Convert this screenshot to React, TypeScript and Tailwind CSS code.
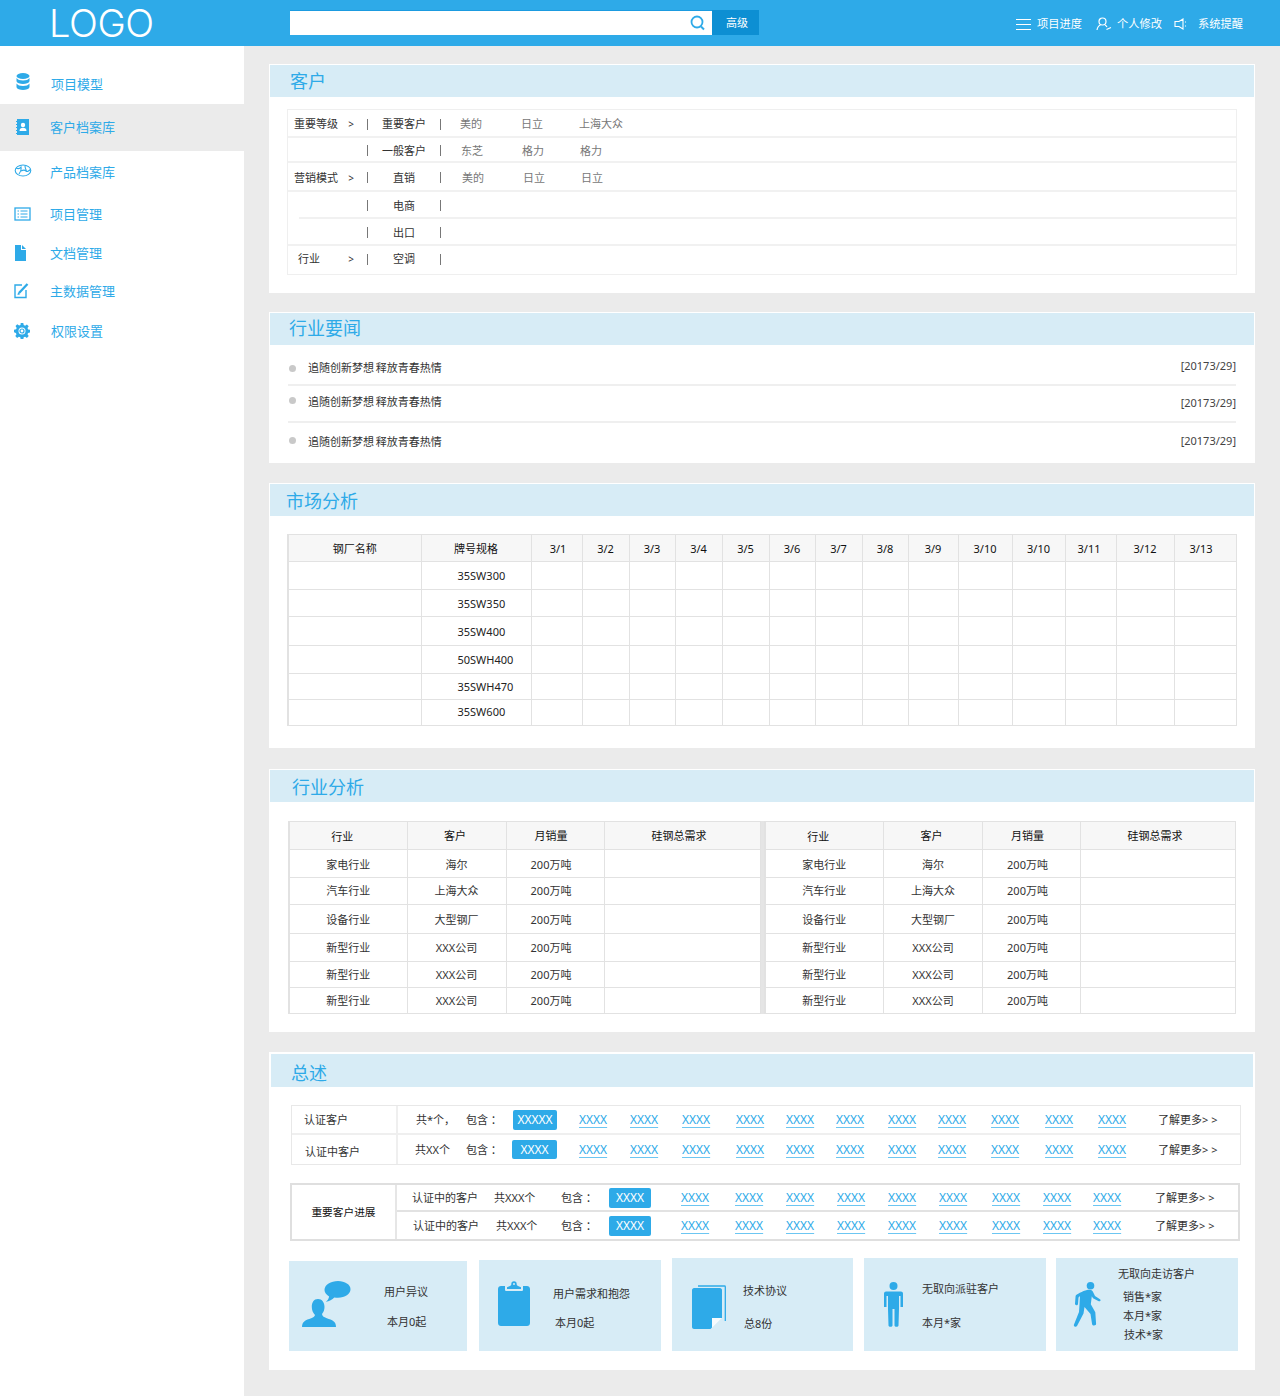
import React from 'react';

function Card({ title, className, band, pad, children }: { title: string; className: string; band: string; pad: string; children: React.ReactNode }) {
  return (
    <section className={`bg-white ${className}`}>
      <div className={`flex h-[32px] items-center bg-[#d7ecf6] text-[18px] leading-[24px] text-[#2eaae8] ${band} ${pad}`}>{title}</div>
      {children}
    </section>
  );
}

function Sep() {
  return <span className="h-[11px] w-px shrink-0 bg-[#777]" />;
}

function CustRow({ h, label, lpad, gt, mid, vals, vpad, inset, last }: { h: string; label?: string; lpad?: string; gt?: boolean; mid: string; vals?: string[]; vpad?: string; inset?: boolean; last?: boolean }) {
  return (
    <div className={`flex items-center border-[#f1f1f1] ${h} ${inset ? 'ml-[11px]' : ''} ${last ? 'pb-[2px]' : 'border-b-2 pt-[2px]'}`}>
      <div className={`flex shrink-0 items-center text-[#333] ${inset ? 'w-[68px]' : 'w-[79px]'}`}>
        <span className={`w-[57px] ${lpad ?? ''}`}>{label}</span>
        <span className="w-[12px] text-center text-[10px]">{gt ? '>' : ''}</span>
      </div>
      <Sep />
      <span className="w-[72px] shrink-0 text-center text-[#333]">{mid}</span>
      <Sep />
      {vals && (
        <div className={`flex text-[#777] ${vpad}`}>
          <span className="w-[61px]">{vals[0]}</span>
          <span className="w-[58px]">{vals[1]}</span>
          <span>{vals[2]}</span>
        </div>
      )}
    </div>
  );
}

const marketWidths = ['w-[133px]', 'w-[110px]', 'w-[51px]', 'w-[47px]', 'w-[46px]', 'w-[47px]', 'w-[47px]', 'w-[46px]', 'w-[47px]', 'w-[46px]', 'w-[50px]', 'w-[54px]', 'w-[53px]', 'w-[51px]', 'w-[58px]', 'w-[62px]'];
const days: [string, string][] = [
  ['3/1', 'pl-[3px]'],
  ['3/2', ''],
  ['3/3', ''],
  ['3/4', ''],
  ['3/5', ''],
  ['3/6', ''],
  ['3/7', ''],
  ['3/8', ''],
  ['3/9', ''],
  ['3/10', ''],
  ['3/10', ''],
  ['3/11', 'pr-[3px]'],
  ['3/12', ''],
  ['3/13', 'pr-[8px]'],
];
const grades: [string, string, string][] = [
  ['35SW300', 'h-[28px]', ''],
  ['35SW350', 'h-[27px]', 'pt-[1px]'],
  ['35SW400', 'h-[29px]', 'pt-[1px]'],
  ['50SWH400', 'h-[28px]', ''],
  ['35SWH470', 'h-[26px]', ''],
  ['35SW600', 'h-[26px]', 'pb-[2px]'],
];

const industryRows: [string, string, string, string][] = [
  ['家电行业', '海尔', 'h-[28px]', 'pt-[3px]'],
  ['汽车行业', '上海大众', 'h-[27px]', ''],
  ['设备行业', '大型钢厂', 'h-[29px]', 'pt-[1px]'],
  ['新型行业', 'XXX公司', 'h-[28px]', ''],
  ['新型行业', 'XXX公司', 'h-[26px]', 'pt-[1px]'],
  ['新型行业', 'XXX公司', 'h-[26px]', ''],
];

function IndustryTable({ w, first, last }: { w: string; first: string; last: string }) {
  const cell = 'border border-[#e2e2e2]';
  return (
    <table className={`table-fixed bg-white text-[11px] ${w}`}>
      <colgroup>
        <col className={first} />
        <col className="w-[99px]" />
        <col className="w-[98px]" />
        <col className={last} />
      </colgroup>
      <thead>
        <tr className="h-[28px] bg-[#f7f7f7] text-[#111]">
          <th className={`${cell} border-l-2 pt-[3px] pr-[12px] font-normal`}>行业</th>
          <th className={`${cell} pt-[1px] pr-[3px] font-normal`}>客户</th>
          <th className={`${cell} pr-[8px] font-normal`}>月销量</th>
          <th className={`${cell} pr-[6px] font-normal`}>硅钢总需求</th>
        </tr>
      </thead>
      <tbody>
        {industryRows.map(([a, b, h, p], i) => (
          <tr key={i} className={`${h} text-[#333]`}>
            <td className={`${cell} border-l-2 text-center ${p}`}>{a}</td>
            <td className={`${cell} text-center ${p}`}>{b}</td>
            <td className={`${cell} pr-[8px] text-center ${p}`}>200万吨</td>
            <td className={cell} />
          </tr>
        ))}
      </tbody>
    </table>
  );
}

function XLink() {
  return <span className="text-[12px] leading-[16px] text-[#2eaae8] underline decoration-[#6cc6f2] underline-offset-[3px]">XXXX</span>;
}

function Chip({ text, className }: { text: string; className: string }) {
  return <span className={`flex items-center justify-center rounded-[2px] bg-[#2eaae8] text-[12px] text-white ${className}`}>{text}</span>;
}

function Links({ n, grid }: { n: number; grid: string }) {
  return (
    <div className={`grid items-center text-[#333] ${grid}`}>
      {Array.from({ length: n }).map((_, i) => (
        <XLink key={i} />
      ))}
      <span className="whitespace-nowrap">了解更多&gt; &gt;</span>
    </div>
  );
}

function Tile({ className, children }: { className: string; children: React.ReactNode }) {
  return <div className={`flex shrink-0 items-start bg-[#d7ecf6] text-[11px] leading-[16px] text-[#333] ${className}`}>{children}</div>;
}

const navItems: [string, string, React.ReactNode, string, string][] = [
  ['项目模型', 'h-[40px]', (
    <svg className="mb-[4px]" width="16" height="18" viewBox="0 0 16 18" fill="#2eaae8">
      <ellipse cx="8" cy="3" rx="6.5" ry="3" />
      <path d="M1.5 5c1 1.7 3.5 2.5 6.5 2.5S13.500 6.700 14.500 5v3.200C14 10 11 11 8 11S2 10 1.500 8.200z" />
      <path d="M1.500 10.500c1 1.700 3.500 2.500 6.500 2.500s5.500-.8 6.500-2.500v3.700C14 16 11 17 8 17s-6-1-6.500-2.800z" />
    </svg>
  ), 'pl-[15px]', 'w-[36px]'],
  ['客户档案库', 'h-[47px] bg-[#ebebeb] pb-[2px]', (
    <svg width="16" height="18" viewBox="0 0 16 18">
      <path fill="#2eaae8" d="M3 1h12v16H3z" />
      <path fill="#2eaae8" d="M2 3h2v1H2zM2 6h2v1H2zM2 9h2v1H2zM2 12h2v1H2zM2 15h2v1H2z" />
      <circle cx="9" cy="7" r="2.200" fill="#fff" />
      <path fill="#fff" d="M5.500 13c0-2.200 1.500-3.200 3.500-3.200s3.500 1 3.500 3.200z" />
    </svg>
  ), 'pl-[14px]', 'w-[36px]'],
  ['产品档案库', 'h-[42px]', (
    <svg className="mb-[3px]" width="18" height="14" viewBox="0 0 18 14" fill="none" stroke="#2eaae8" strokeWidth="1.100">
      <ellipse cx="9" cy="6.500" rx="7.800" ry="5.500" />
      <path d="M2 4c2 1 4 .5 5-1 .5 2 0 4-2 7M7 7c2-1 4-1 5 0s3 0 4.500-1.500M11 2c0 2 .5 3 1.500 5" />
    </svg>
  ), 'pl-[14px]', 'w-[36px]'],
  ['项目管理', 'h-[42px]', (
    <svg width="17" height="14" viewBox="0 0 17 14" fill="none" stroke="#2eaae8">
      <rect x="1" y="1" width="15" height="12" strokeWidth="1.300" />
      <path d="M3.500 4h1.500M6.500 4h7M3.500 7h1.500M6.500 7h7M3.500 10h1.500M6.500 10h7" />
    </svg>
  ), 'pl-[14px]', 'w-[36px]'],
  ['文档管理', 'h-[37px] pb-[2px]', (
    <svg width="13" height="16" viewBox="0 0 13 16" fill="#2eaae8">
      <path d="M1 0h6v5h5v11H1z" />
      <path d="M8 0l4 4H8z" />
    </svg>
  ), 'pl-[14px]', 'w-[36px]'],
  ['主数据管理', 'h-[39px] pb-[2px]', (
    <svg width="17" height="17" viewBox="0 0 17 17" fill="none" stroke="#2eaae8" strokeWidth="1.400">
      <path d="M9 3H2v12.500h11V8" />
      <path strokeWidth="2.300" d="M6 11l8.500-9" />
      <path fill="#2eaae8" stroke="none" d="M4.500 13l.6-2.800 2.200 2z" />
    </svg>
  ), 'pl-[13px]', 'w-[37px]'],
  ['权限设置', 'h-[40px]', (
    <svg width="16" height="16" viewBox="0 0 16 16">
      <path fill="#2eaae8" d="M6.700 0h2.600l.4 2.100 1.400.6 1.800-1.200 1.800 1.800-1.200 1.800.6 1.400 2.100.4v2.600l-2.100.4-.6 1.400 1.200 1.800-1.800 1.800-1.800-1.200-1.400.6-.4 2.100H6.700l-.4-2.100-1.400-.6-1.800 1.200-1.800-1.800 1.200-1.800-.6-1.400L0 9.300V6.700l2.100-.4.6-1.400-1.200-1.800 1.800-1.800 1.800 1.200 1.400-.6z" />
      <circle cx="8" cy="8" r="3.500" fill="#fff" />
      <circle cx="8" cy="8" r="2" fill="none" stroke="#2eaae8" strokeWidth="1.200" />
    </svg>
  ), 'pl-[14px]', 'w-[37px]'],
];

export default function App() {
  return (
    <div className="flex min-h-[1396px] w-[1280px] flex-col bg-[#ebebeb] font-['Noto_Sans','Noto_Sans_CJK_SC',sans-serif] text-[11px] leading-[16px]">
      <header className="flex h-[46px] shrink-0 items-start bg-[#2eaae8] text-white">
        <div className="flex h-[46px] w-[290px] items-start pl-[49px]">
          <span className="font-['Inter',sans-serif] text-[38px] leading-[46px] font-light tracking-[-0.4px]">LOGO</span>
        </div>
        <div className="mt-[10px] flex h-[25px] w-[422px] items-center justify-end border-t border-[#1b9be0] bg-white pr-[6px]">
          <svg width="16" height="16" viewBox="0 0 16 16" fill="none" stroke="#2eaae8" strokeWidth="1.800">
            <circle cx="7" cy="7" r="5.500" />
            <path strokeWidth="2" d="M11 11.500l3 3" />
          </svg>
        </div>
        <div className="mt-[10px] flex h-[25px] w-[47px] items-center justify-center bg-[#0d8fd3] pl-[3px] text-[11px]">高级</div>
        <div className="ml-auto flex h-[46px] items-center pt-[2px] pr-[37px] text-[11.25px]">
          <svg width="15" height="13" viewBox="0 0 15 13" stroke="#fff" strokeWidth="1.200">
            <path d="M0 1.500h15M0 6.500h15M0 11.500h15" />
          </svg>
          <span className="ml-[6px]">项目进度</span>
          <svg className="ml-[14px]" width="16" height="14" viewBox="0 0 16 14" fill="none" stroke="#fff" strokeWidth="1.200">
            <circle cx="6.500" cy="4.500" r="3.500" />
            <path d="M1 13c.5-3 2-4.500 3.500-5M9 8c1 .5 1.500 1 2 2M10.500 12.500l4.500-2" />
          </svg>
          <span className="ml-[5px]">个人修改</span>
          <svg className="ml-[12px]" width="14" height="12" viewBox="0 0 14 12" fill="none" stroke="#fff" strokeWidth="1.100">
            <path d="M1 3.500h4L9 1v10L5 8.500H1zM11.500 3.500v1M11.500 7.500v1" />
          </svg>
          <span className="ml-[10px]">系统提醒</span>
        </div>
      </header>

      <div className="flex flex-1">
        <aside className="w-[244px] shrink-0 bg-white pt-[18px] text-[13px] text-[#2eaae8]">
          {navItems.map(([label, h, icon, pl, iw]) => (
            <div key={label} className={`flex items-center ${h} ${pl}`}>
              <span className={`flex items-center ${iw}`}>{icon}</span>
              <span>{label}</span>
            </div>
          ))}
        </aside>

        <main className="w-[986px] shrink-0 pt-[18px] pl-[25px] text-[#333]">
          <Card title="客户" className="h-[229px] w-[986px] p-px" band="" pad="pl-[20px]">
            <div className="mt-[12px] ml-[17px] w-[950px] border border-[#efefef]">
              <CustRow h="h-[28px]" label="重要等级" gt mid="重要客户" vals={['美的', '日立', '上海大众']} vpad="pl-[19px]" lpad="pl-[6px]" />
              <CustRow h="h-[25px]" mid="一般客户" vals={['东芝', '格力', '格力']} vpad="pl-[20px]" />
              <CustRow h="h-[29px]" label="营销模式" gt mid="直销" vals={['美的', '日立', '日立']} vpad="pl-[21px]" lpad="pl-[6px]" />
              <CustRow h="h-[27px]" mid="电商" inset />
              <CustRow h="h-[27px]" mid="出口" />
              <CustRow h="h-[28px]" label="行业" gt mid="空调" lpad="pl-[10px]" last />
            </div>
          </Card>

          <Card title="行业要闻" className="mt-[19px] h-[151px] w-[986px] p-px" band="pb-[2px]" pad="pl-[19px]">
            {[
              ['h-[41px] border-b-2', 'mt-[20px]', 'mt-[15px]', 'mt-[13px]'],
              ['h-[37px] border-b-2', 'mt-[11px]', 'mt-[8px]', 'mt-[9px]'],
              ['h-[40px]', 'mt-[14px]', 'mt-[11px]', 'mt-[10px]'],
            ].map(([row, dot, text, date], i) => (
              <div key={i} className={`mx-[18px] flex items-start justify-between border-[#efefef] ${row}`}>
                <div className="flex items-start">
                  <span className={`ml-[1px] h-[7px] w-[7px] rounded-full bg-[#c9c9c9] ${dot}`} />
                  <span className={`ml-[12px] [word-spacing:-1px] ${text}`}>追随创新梦想 释放青春热情</span>
                </div>
                <span className={`${date} text-[#444]`}>[20173/29]</span>
              </div>
            ))}
          </Card>

          <Card title="市场分析" className="mt-[20px] h-[265px] w-[986px] p-px" band="pt-[2px]" pad="pl-[16px]">
            <div className="mt-[18px] ml-[17px]">
              <table className="w-[948px] table-fixed text-[11px]">
                <colgroup>
                  {marketWidths.map((w, i) => (
                    <col key={i} className={w} />
                  ))}
                </colgroup>
                <thead>
                  <tr className="h-[27px] bg-[#f7f7f7] text-[#111]">
                    <th className="border border-l-2 border-[#e2e2e2] pt-[2px] font-normal">钢厂名称</th>
                    <th className="border border-[#e2e2e2] pt-[2px] font-normal">牌号规格</th>
                    {days.map(([d, p], i) => (
                      <th key={i} className={`border border-[#e2e2e2] pt-[2px] font-normal ${p}`}>{d}</th>
                    ))}
                  </tr>
                </thead>
                <tbody>
                  {grades.map(([g, h, p]) => (
                    <tr key={g} className={h}>
                      <td className="border border-l-2 border-[#e2e2e2]" />
                      <td className={`border border-[#e2e2e2] pl-[36px] text-[#222] ${p}`}>{g}</td>
                      {days.map((_, i) => (
                        <td key={i} className="border border-[#e2e2e2]" />
                      ))}
                    </tr>
                  ))}
                </tbody>
              </table>
            </div>
          </Card>

          <Card title="行业分析" className="mt-[21px] h-[263px] w-[986px] p-px" band="pt-[2px]" pad="pl-[22px]">
            <div className="mt-[19px] ml-[18px] flex w-[947px] bg-[#e5e5e5]">
              <IndustryTable w="w-[471px]" first="w-[118px]" last="w-[156px]" />
              <span className="w-[3px] shrink-0" />
              <IndustryTable w="w-[471px]" first="w-[119px]" last="w-[155px]" />
            </div>
          </Card>

          <Card title="总述" className="mt-[20px] h-[318px] w-[986px] p-[2px]" band="h-[33px] pt-[5px]" pad="pl-[20px]">
            <div className="mt-[18px] ml-[20px] w-[950px] border border-[#e8e8e8]">
              <div className="flex h-[29px] items-center border-b-2 border-[#efefef]">
                <span className="flex h-full w-[106px] shrink-0 items-center border-r-2 border-[#efefef] pl-[12px]">认证客户</span>
                <span className="w-[68px] shrink-0 pl-[18px]">共*个，</span>
                <span className="w-[47px] shrink-0 whitespace-nowrap">包含 ：</span>
                <Chip text="XXXXX" className="h-[20px] w-[44px] shrink-0" />
                <div className="ml-[22px]">
                  <Links n={11} grid="grid-cols-[51px_52px_54px_50px_50px_52px_50px_53px_54px_53px_60px_60px]" />
                </div>
              </div>
              <div className="flex h-[29px] items-center">
                <span className="flex h-full w-[106px] shrink-0 items-center border-r-2 border-[#efefef] pt-[4px] pl-[13px]">认证中客户</span>
                <span className="w-[68px] shrink-0 pl-[17px]">共XX个</span>
                <span className="w-[46px] shrink-0 whitespace-nowrap">包含 ：</span>
                <Chip text="XXXX" className="h-[19px] w-[45px] shrink-0" />
                <div className="ml-[22px]">
                  <Links n={11} grid="grid-cols-[51px_52px_54px_50px_50px_52px_50px_53px_54px_53px_60px_60px]" />
                </div>
              </div>
            </div>

            <div className="mt-[18px] ml-[19px] flex h-[58px] w-[950px] border-2 border-[#dfdfdf]">
              <div className="flex w-[105px] shrink-0 items-center justify-center border-r-2 border-[#e6e6e6] text-[10.7px] text-[#111]">重要客户进展</div>
              <div className="flex-1">
                {[
                  ['h-[27px] border-b-2', 'pl-[15px]', 'w-[82px] pl-[15px]'],
                  ['h-[27px]', 'pl-[16px]', 'w-[82px] pl-[17px]'],
                ].map(([row, a, b], i) => (
                  <div key={i} className={`flex items-center border-[#e2e2e2] ${row}`}>
                    <span className={`w-[82px] shrink-0 whitespace-nowrap ${a}`}>认证中的客户</span>
                    <span className={`shrink-0 ${b}`}>共XXX个</span>
                    <span className="w-[48px] shrink-0 whitespace-nowrap">包含 ：</span>
                    <Chip text="XXXX" className="h-[20px] w-[42px] shrink-0" />
                    <div className="ml-[30px]">
                      <Links n={9} grid="grid-cols-[54px_51px_51px_51px_51px_53px_51px_50px_62px_60px]" />
                    </div>
                  </div>
                ))}
              </div>
            </div>

            <div className="mt-[17px] ml-[18px] flex h-[93px] items-end">
              <Tile className="h-[90px] w-[178px]">
                <svg className="mt-[20px] ml-[13px] shrink-0" width="50" height="46" viewBox="0 0 50 46" fill="#2eaae8">
                  <path d="M36 0c7 0 12.500 3.600 12.500 8.300S43 16.800 36 16.800c-1.300 0-2.500-.1-3.700-.3-2 2-5 3.800-8.500 4.200 1.800-1.400 3-3.200 3.300-5.300-2.800-1.500-4.600-3.800-4.600-6.300C22.500 3.600 29 0 36 0z" />
                  <path d="M16 18c4 0 6.500 3.400 6.500 8 0 3-1 5.200-2.500 7 .2 2 1.500 3 4.800 4.200 5.400 1.800 9.400 3.200 9.200 8.800H0c0-5.600 3.800-7 9.200-8.800 2.600-1 3.600-2 3.800-3.200-2-2-3.200-4.800-3.200-8 0-4.600 2-8 6.200-8z" />
                </svg>
                <div className="mt-[23px] ml-[32px] w-[60px] shrink-0">
                  <div>用户异议</div>
                  <div className="mt-[14px] pl-[3px]">本月0起</div>
                </div>
              </Tile>
              <Tile className="ml-[12px] h-[91px] w-[182px]">
                <svg className="mt-[21px] ml-[19px] shrink-0" width="32" height="45" viewBox="0 0 32 45" fill="#2eaae8">
                  <path d="M3 5h4v3.500c0 1 .6 1.500 1.500 1.500h15c1 0 1.500-.5 1.500-1.500V5h4c1.500 0 3 1.300 3 3v34c0 1.700-1.300 3-3 3H3c-1.700 0-3-1.300-3-3V8c0-1.700 1.300-3 3-3z" />
                  <path d="M13.300 3a2.700 2.700 0 1 1 5.400 0c0 1 .3 1.500 1.300 2l3 1.300V8H9V6.300L12 5c1-.5 1.300-1 1.300-2zM15 3a1 1 0 1 0 2 0 1 1 0 0 0-2 0z" />
                </svg>
                <div className="mt-[26px] ml-[23px] w-[90px] shrink-0">
                  <div>用户需求和抱怨</div>
                  <div className="mt-[13px] pl-[2px]">本月0起</div>
                </div>
              </Tile>
              <Tile className="ml-[11px] h-[93px] w-[181px]">
                <svg className="mt-[27px] ml-[20px] shrink-0" width="34" height="44" viewBox="0 0 34 44" fill="none">
                  <path stroke="#2eaae8" strokeWidth="1.300" d="M6 1h26.500c.4 0 .8.400.8.800V36" />
                  <path fill="#2eaae8" d="M2 3h26c1 0 2 1 2 2v27.500L18.500 44H2c-1 0-2-1-2-2V5c0-1 1-2 2-2z" />
                  <path fill="#f7fbfd" d="M20 33h10L20 43z" />
                </svg>
                <div className="mt-[25px] ml-[17px] w-[60px] shrink-0">
                  <div>技术协议</div>
                  <div className="mt-[17px] pl-[1px]">总8份</div>
                </div>
              </Tile>
              <Tile className="ml-[11px] h-[93px] w-[182px]">
                <svg className="mt-[24px] ml-[20px] shrink-0" width="19" height="45" viewBox="0 0 19 45" fill="#2eaae8">
                  <circle cx="9.500" cy="4" r="4" />
                  <path d="M2 9.500h15c1 0 2 .8 2 2V25h-2.500V14H15v13l-.5 16.500c0 1.800-4 1.800-4 0V27h-2v16.500c0 1.800-4 1.800-4 0L4 27V14H2.500v11H0V11.500c0-1.200 1-2 2-2z" />
                </svg>
                <div className="mt-[23px] ml-[19px] w-[90px] shrink-0">
                  <div>无取向派驻客户</div>
                  <div className="mt-[18px]">本月*家</div>
                </div>
              </Tile>
              <Tile className="ml-[10px] h-[93px] w-[182px]">
                <svg className="mt-[24px] ml-[17px] shrink-0" width="28" height="45" viewBox="0 0 28 45" fill="#2eaae8">
                  <circle cx="17.500" cy="3.800" r="3.800" />
                  <path d="M14 8c3-.6 5.500 0 6.300 2.400l1.700 3.600 5 3.200c1.200.8.200 2.600-1.200 2l-5.800-3-1.200-2-1 8 4.500 8 .8 11.800c0 1.800-3.700 2-4 .2L17.500 32 11.500 25l-1 6.500L4 44c-1 1.700-4 .5-3-1.500L6 30l.5-7.500L7 14 5.500 15.500 5 22c-.2 1.800-3 1.600-3-.2l.6-7.800C2.800 12.600 10 8.800 14 8z" />
                </svg>
                <div className="ml-[17px] w-[90px] shrink-0">
                  <div className="mt-[8px]">无取向走访客户</div>
                  <div className="mt-[7px] pl-[5px]">销售*家</div>
                  <div className="mt-[3px] pl-[5px]">本月*家</div>
                  <div className="mt-[3px] pl-[6px]">技术*家</div>
                </div>
              </Tile>
            </div>
          </Card>
        </main>
      </div>
    </div>
  );
}
